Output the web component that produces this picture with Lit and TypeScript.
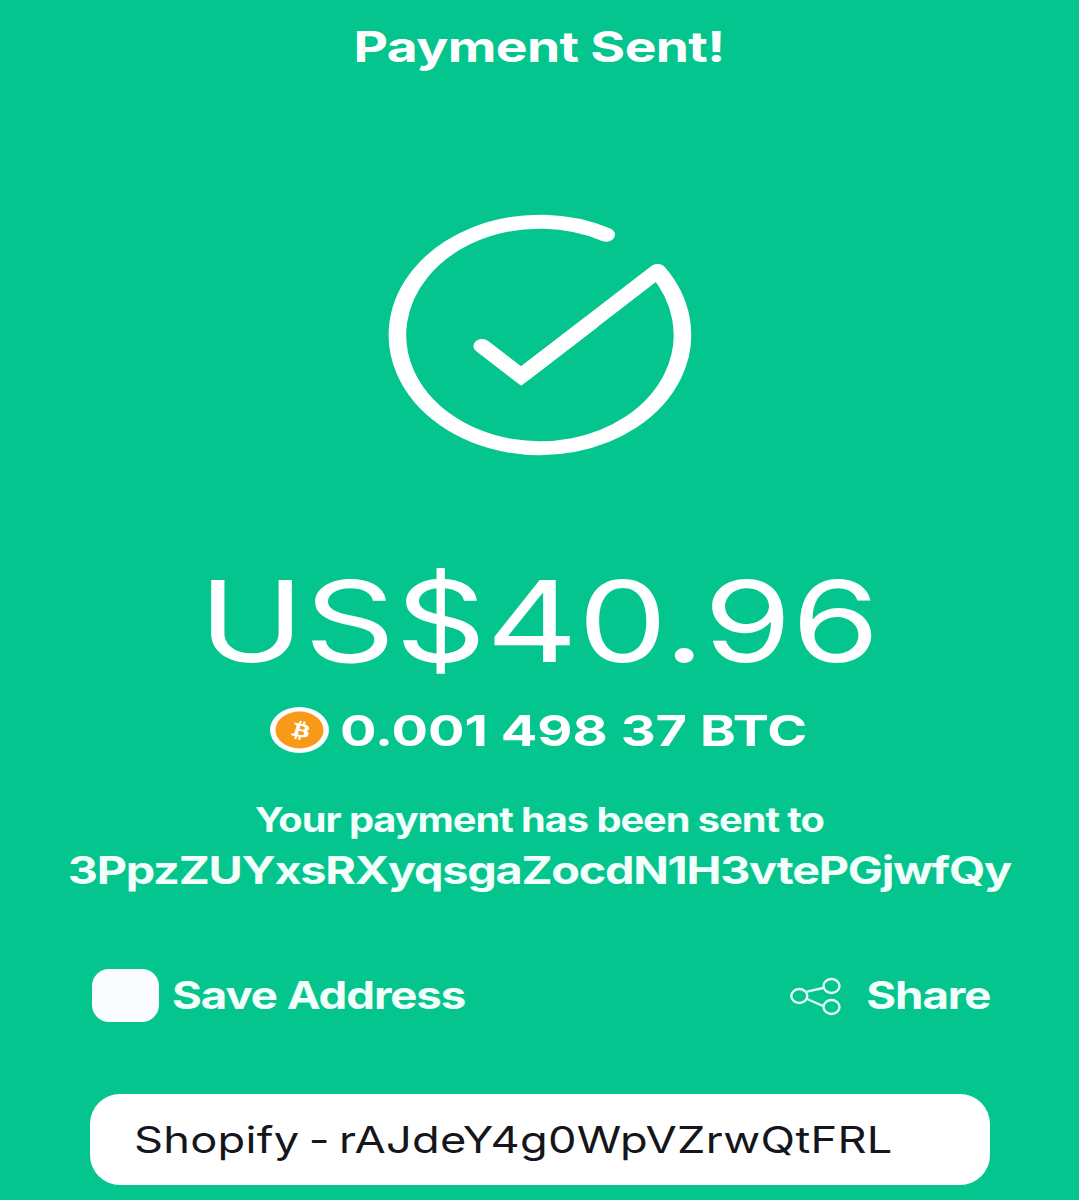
import { LitElement, html, css } from 'lit';
import { customElement } from 'lit/decorators.js';

@customElement('app-root')
export class AppRoot extends LitElement {
  static styles = css`
    :host {
      display: block;
      height: 1200px;
      overflow: hidden;
      background: #03c58d;
      color: #fff;
      font-family: Inter, 'Liberation Sans', sans-serif;
    }

    .page {
      display: flex;
      flex-direction: column;
      align-items: center;
    }

    .wide {
      display: inline-block;
      white-space: nowrap;
    }

    .title {
      margin-top: 22px;
      height: 50px;
      font-size: 42px;
      line-height: 50px;
      font-weight: 700;
    }

    .title .wide {
      letter-spacing: -0.5px;
      transform: scaleX(1.27);
    }

    .check {
      display: block;
      margin-top: 143px;
      width: 302px;
      height: 240px;
      fill: none;
      stroke: #fff;
      stroke-width: 14;
      stroke-linecap: round;
      overflow: visible;
    }

    .amount {
      margin-top: 98px;
      height: 136px;
      font-size: 113px;
      line-height: 136px;
      font-weight: 400;
    }

    .amount .wide {
      transform: scaleX(1.255);
    }

    .crypto {
      display: flex;
      align-items: center;
      align-self: flex-start;
      gap: 10px;
      margin-top: 12px;
      margin-left: 270px;
      height: 58px;
    }

    .coin {
      display: block;
      width: 60px;
      height: 47px;
    }

    .crypto-value {
      font-size: 43px;
      line-height: 58px;
      font-weight: 700;
    }

    .crypto-value .wide {
      transform: scaleX(1.26);
      transform-origin: left center;
    }

    .sent-to {
      margin-top: 36px;
      height: 50px;
      font-size: 34px;
      line-height: 50px;
      font-weight: 700;
      color: #f2fffb;
    }

    .sent-to .wide {
      letter-spacing: -0.9px;
      transform: scaleX(1.17);
    }

    .address {
      height: 51px;
      font-size: 38px;
      line-height: 51px;
      font-weight: 700;
      color: #f2fffb;
    }

    .address .wide {
      letter-spacing: -1px;
      transform: scaleX(1.23);
    }

    .actions {
      display: flex;
      justify-content: space-between;
      align-items: center;
      box-sizing: border-box;
      width: 100%;
      margin-top: 73px;
      padding: 0 89px 0 92px;
    }

    .action {
      display: flex;
      align-items: center;
    }

    .checkbox {
      width: 67px;
      height: 53px;
      border-radius: 17px;
      background: #fbfcff;
      margin-right: 13px;
    }

    .label {
      font-size: 38px;
      line-height: 53px;
      font-weight: 700;
      letter-spacing: -0.9px;
      color: #f2fffb;
      transform: scaleX(1.2);
      transform-origin: left center;
    }

    .share-icon {
      display: block;
      width: 52px;
      height: 40px;
      margin-right: 45px;
      fill: none;
      stroke: #e0fbf2;
      stroke-width: 2.4;
    }

    .label.share-label {
      transform-origin: right center;
    }

    .field {
      box-sizing: border-box;
      width: 900px;
      height: 91px;
      margin-top: 72px;
      padding-left: 44px;
      border-radius: 30px;
      background: #fff;
      color: #14161c;
      font-size: 37px;
      line-height: 91px;
      font-weight: 400;
    }

    .field .wide {
      letter-spacing: 0.2px;
      word-spacing: -3px;
      transform: scaleX(1.222);
      transform-origin: left center;
    }
  `;

  render() {
    return html`
      <div class="page">
        <div class="title"><span class="wide">Payment Sent!</span></div>

        <svg class="check" viewBox="0 0 240 240" preserveAspectRatio="none">
          <path stroke-linejoin="round" d="M172.6 19.7A113.25 113.25 0 1 0 213.4 56L105 161" />
          <path stroke-linejoin="miter" d="M74 131L105 161L160 108" />
        </svg>

        <div class="amount"><span class="wide">US$40.96</span></div>

        <div class="crypto">
          <svg class="coin" viewBox="0 0 60 47">
            <ellipse cx="29.5" cy="23" rx="29.5" ry="23" fill="#fff" />
            <ellipse cx="29.5" cy="23" rx="24" ry="18.5" fill="#f89a17" />
            <g transform="translate(11.1 7.8) scale(1.6 1.27)" fill="#fff">
              <path
                d="M17.44 10.72c.24-1.59-.97-2.45-2.63-3.02l.54-2.15-1.31-.33-.52 2.09c-.35-.09-.7-.17-1.05-.25l.53-2.11-1.31-.33-.54 2.15c-.29-.07-.57-.13-.84-.2l-1.81-.45-.35 1.4s.97.22.95.24c.53.13.63.48.61.76l-.61 2.45c.04.01.08.02.14.04l-.14-.03-.86 3.44c-.07.16-.23.4-.6.31.01.02-.95-.24-.95-.24l-.65 1.5 1.71.43c.32.08.63.16.93.24l-.54 2.18 1.31.33.54-2.16c.36.1.7.19 1.04.27l-.54 2.15 1.31.33.54-2.18c2.24.42 3.92.25 4.63-1.77.57-1.63-.03-2.57-1.21-3.18.86-.2 1.5-.76 1.68-1.93zm-3 4.21c-.4 1.63-3.14.75-4.03.53l.72-2.88c.89.22 3.74.66 3.31 2.35zm.41-4.23c-.37 1.48-2.65.73-3.39.54l.65-2.61c.74.18 3.13.53 2.74 2.07z"
              />
            </g>
          </svg>
          <div class="crypto-value"><span class="wide">0.001 498 37 BTC</span></div>
        </div>

        <div class="sent-to"><span class="wide">Your payment has been sent to</span></div>
        <div class="address"><span class="wide">3PpzZUYxsRXyqsgaZocdN1H3vtePGjwfQy</span></div>

        <div class="actions">
          <div class="action">
            <div class="checkbox"></div>
            <span class="label wide">Save Address</span>
          </div>
          <div class="action">
            <svg class="share-icon" viewBox="0 0 52 40">
              <ellipse cx="9.3" cy="20" rx="8" ry="7" />
              <ellipse cx="41.5" cy="10" rx="8" ry="7" />
              <ellipse cx="41.5" cy="31" rx="8" ry="7" />
              <path d="M17 15.7L33 12M17 23L33 30" />
            </svg>
            <span class="label wide share-label">Share</span>
          </div>
        </div>

        <div class="field"><span class="wide">Shopify - rAJdeY4g0WpVZrwQtFRL</span></div>
      </div>
    `;
  }
}
